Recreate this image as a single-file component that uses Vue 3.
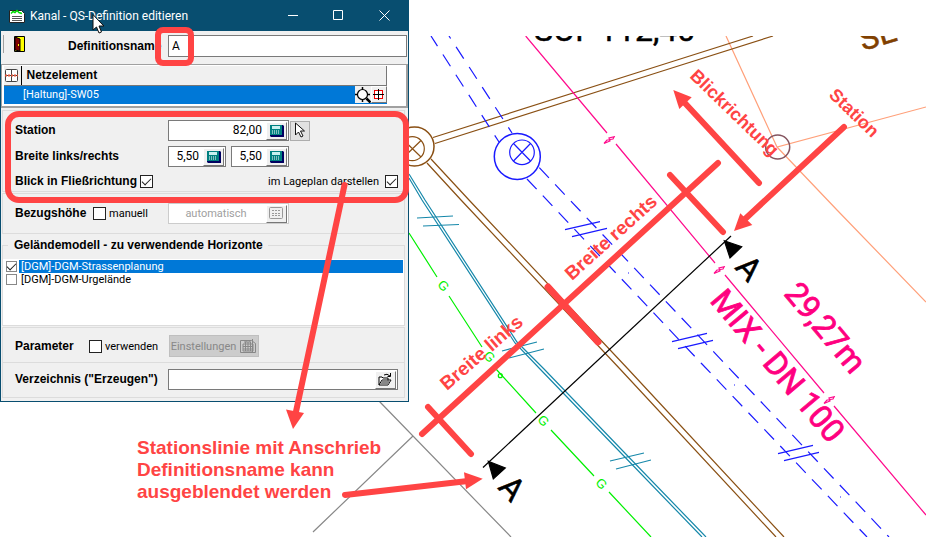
<script setup>
import { ref } from 'vue'

const name = ref('A')
const station = ref('82,00')
const left = ref('5,50')
const right = ref('5,50')
const flow = ref(true)
const showOnPlan = ref(true)
const manual = ref(false)
const height = ref('automatisch')
const useParams = ref(false)
const directory = ref('')
const horizons = ref([
  { label: '[DGM]-DGM-Strassenplanung', on: true, selected: true },
  { label: '[DGM]-DGM-Urgelände', on: false, selected: false },
])

const gasMarks = [[443, 286], [489, 357], [543, 421], [601, 484]]
const breaks = [[609, 140], [719, 270], [829, 400]]
</script>

<template>
  <main class="stage">
    <svg class="plan" aria-label="Lageplan">
      <defs>
        <clipPath id="plan-area"><rect x="0" y="36" width="926" height="501" /></clipPath>
      </defs>
      <g clip-path="url(#plan-area)">
        <g class="salmon">
          <path d="M726 36L777 147L926 107M777 147L837 210L926 302" />
        </g>
        <circle class="node" cx="777.7" cy="147" r="12" />
        <g class="grey"><path d="M379 401L511 537M313 532L413 436" /></g>
        <g class="green">
          <path d="M409 233L437 277M449 296L482 347M496 369L536 413M551 430L594 476M609 492L651 537" />
          <circle cx="500.3" cy="375.7" r="2" />
        </g>
        <text v-for="(g, i) in gasMarks" :key="'g' + i" class="gas" :transform="`translate(${g[0]} ${g[1]}) rotate(48)`" y="4">G</text>
        <g class="teal">
          <path d="M409 174L425 200L517 342L544 369L620 448L706 537M409 178L422 200L515 343L540 369L620 452L702 537" />
          <path d="M417 218L453 216M423 226L459 224.500M502 351L537 342M509 358L544 349M610 461L644 453M616 469L651 460" />
        </g>
        <g class="brown">
          <path d="M433 137.500L670 62.300L753 36M435 143.500L660 71.700L773 36" />
          <path d="M431 159L469 200L628 369L784 537M427 163L461 200L620 369L776 537" />
          <circle class="heavy" cx="414.500" cy="146.500" r="19.500" />
          <circle cx="412.300" cy="148.700" r="12" />
          <path d="M404 140.500L421 157M421 140.500L404 157" />
        </g>
        <g class="blue">
          <path class="dash" stroke-dashoffset="2" d="M431 36L499 142" />
          <path class="dash" stroke-dashoffset="11" d="M449 36L512 133" />
          <path class="dash low" d="M527 179L702 364L867 537" />
          <path class="dash low" d="M539.300 167.700L889 537" />
          <circle class="heavy" cx="517.300" cy="156.500" r="23" />
          <circle cx="522" cy="152.300" r="12.300" />
          <path d="M513.500 143.500L530.500 161M530.500 143.500L513.500 161" />
          <path d="M565 229.700L600 221.700M572 236.700L607 228.300M672 341.700L707 333.300M678 348.700L713 340.300M778 453.700L813 445.300M784 460.700L819 452.300" />
          <path d="M628 273h1M734 385h1M840 497h1" />
        </g>
        <g class="pink">
          <path d="M525.700 36L607 133M616 144L715 263M725 275L824 393M834 406L926 515" />
          <path v-for="(b, i) in breaks" :key="'b' + i" :transform="`translate(${b[0]} ${b[1]})`" d="M-5 3.500L1 1L0 -2L6 -3.500M-5 3.500L-2 0L4 -1L5 -3" />
        </g>
        <g class="black">
          <path d="M731 236L483 467.500" />
          <path class="solid" d="M724.300 240.700L741.700 246.700L730 258ZM488.300 461.300L505.300 468L493.300 479Z" />
        </g>
        <text class="cad dark" transform="translate(734 268) rotate(47)">A</text>
        <text class="cad dark" transform="translate(497 488) rotate(47)">A</text>
        <text class="cad magenta" transform="translate(783 294) rotate(50)">29,27m</text>
        <text class="cad magenta" transform="translate(709 301) rotate(50)">MIX - DN 100</text>
        <text class="cad dark" x="534" y="41">SOI</text>
        <text class="cad dark" x="599" y="41">112,40</text>
        <text class="cad umber" transform="translate(863 51) rotate(-17)">SE</text>
      </g>
    </svg>

    <form class="dialog" @submit.prevent>
      <header class="title">
        <svg class="app-icon" width="16" height="16" viewBox="0 0 16 16">
          <path d="M.5 2.500h12l3 3v9H.5z" fill="#fff" stroke="#222" />
          <path d="M2 5.500l2-2 2 1 2-2 2 2 3 1" fill="none" stroke="#0d0" stroke-width="1.500" />
          <path d="M3 8.500h10M3 10.500h10M3 12.500h10" stroke="#555" />
        </svg>
        <h1>Kanal - QS-Definition editieren</h1>
        <button type="button" aria-label="Minimieren"><svg width="11" height="11"><path d="M0 5.500h10" /></svg></button>
        <button type="button" aria-label="Maximieren"><svg width="11" height="11"><path d="M.5 .5h9v9h-9z" /></svg></button>
        <button type="button" aria-label="Schließen"><svg width="11" height="11"><path d="M.5 .5l10 10M10.500 .5l-10 10" /></svg></button>
      </header>

      <div class="name-row">
        <button class="exit" type="button" aria-label="Beenden">
          <svg width="12" height="16" viewBox="0 0 12 16">
            <path d="M.5 .5h10v15H.5z" fill="#ff0" stroke="#000" />
            <path d="M1 1l5 2v12l-5-1z" fill="#800000" stroke="#000" />
            <path d="M4.500 8v2" stroke="#ff0" />
          </svg>
        </button>
        <label class="strong" for="name">Definitionsname</label>
        <input id="name" v-model="name" type="text">
      </div>

      <div class="net">
        <table>
          <thead>
            <tr>
              <th class="mark">
                <svg width="15" height="15" viewBox="0 0 15 15"><rect x="1.500" y="1.500" width="12" height="12" rx="1" fill="#fff" stroke="#444" /><path d="M7.500 1v13M1 7.500h13" stroke="#444" /><path d="M1 7.500h13" stroke="#e0553a" stroke-width="2" stroke-dasharray="2 1" /></svg>
              </th>
              <th>Netzelement</th>
            </tr>
          </thead>
          <tbody>
            <tr>
              <td class="mark"></td>
              <td>
                <div class="cell">
                  <span>[Haltung]-SW05</span>
                  <button type="button" aria-label="Zoomen"><svg width="16" height="16" viewBox="0 0 16 16"><circle cx="7.500" cy="7.500" r="5" fill="#fff" stroke="#000" stroke-width="1.200" /><path d="M7.500 0v3M7.500 12v3M0 7.500h3M12 7.500h3" stroke="#000" stroke-width="1.500" /><path d="M11.500 11.500l4 4" stroke="#000" stroke-width="2.500" /></svg></button>
                  <button class="raised" type="button" aria-label="Wählen"><svg width="14" height="14" viewBox="0 0 14 14"><rect x="2.500" y="2.500" width="8" height="8" fill="#fff" stroke="#e00" /><path d="M6.500 1v11M1 6.500h11" stroke="#000" /></svg></button>
                </div>
              </td>
            </tr>
          </tbody>
        </table>
      </div>

      <section class="panel first">
        <div class="row">
          <label class="strong lead" for="station">Station</label>
          <span class="field wide"><input id="station" v-model="station" type="text"><button class="raised calc" type="button" aria-label="Rechner"><svg width="14" height="12" viewBox="0 0 14 12"><path d="M0 0h13l1 1v11H1L0 11z" fill="#000060" /><path d="M0 0h12v10H0z" fill="#008080" /><path d="M2 1h8v3H2z" fill="#c8f0f0" /><path d="M2 6h8M2 8h8" stroke="#fff" stroke-dasharray="1 1" /></svg></button></span>
          <button class="pick" type="button" aria-label="Im Plan wählen"><svg width="12" height="17" viewBox="0 0 12 17"><path d="M1.500 1v12l3-3 2.500 5 2-1-2.500-5h4z" fill="#fff" stroke="#111" /></svg></button>
        </div>
        <div class="row">
          <label class="strong lead" for="left">Breite links/rechts</label>
          <span class="field half"><input id="left" v-model="left" type="text"><button class="raised calc" type="button" aria-label="Rechner"><svg width="14" height="12" viewBox="0 0 14 12"><path d="M0 0h13l1 1v11H1L0 11z" fill="#000060" /><path d="M0 0h12v10H0z" fill="#008080" /><path d="M2 1h8v3H2z" fill="#c8f0f0" /><path d="M2 6h8M2 8h8" stroke="#fff" stroke-dasharray="1 1" /></svg></button></span>
          <span class="field half next"><input v-model="right" type="text" aria-label="Breite rechts"><button class="raised calc" type="button" aria-label="Rechner"><svg width="14" height="12" viewBox="0 0 14 12"><path d="M0 0h13l1 1v11H1L0 11z" fill="#000060" /><path d="M0 0h12v10H0z" fill="#008080" /><path d="M2 1h8v3H2z" fill="#c8f0f0" /><path d="M2 6h8M2 8h8" stroke="#fff" stroke-dasharray="1 1" /></svg></button></span>
        </div>
        <div class="row checks">
          <label class="strong tick close">Blick in Fließrichtung <input v-model="flow" type="checkbox"></label>
          <label class="tick">im Lageplan darstellen <input v-model="showOnPlan" type="checkbox"></label>
        </div>
      </section>

      <section class="panel second">
        <div class="row">
          <label class="strong ref" for="height">Bezugshöhe</label>
          <label class="tick after"><input v-model="manual" type="checkbox"> manuell</label>
          <span class="field wide off"><input id="height" v-model="height" type="text" disabled><button class="raised calc" type="button" disabled aria-label="Rechner"><svg width="15" height="13" viewBox="0 0 15 13"><rect x=".5" y=".5" width="13" height="11" rx="1" fill="none" stroke="#999" /><path d="M3 3.500h8M3 6.500h8M3 8.500h8" stroke="#999" stroke-dasharray="2 1" /></svg></button></span>
        </div>
      </section>

      <fieldset>
        <legend>Geländemodell - zu verwendende Horizonte</legend>
        <ul>
          <li v-for="h in horizons" :key="h.label" :class="{ selected: h.selected }">
            <label><input v-model="h.on" type="checkbox"><span>{{ h.label }}</span></label>
          </li>
        </ul>
      </fieldset>

      <section class="panel params">
        <div class="row">
          <span class="strong par">Parameter</span>
          <label class="tick after"><input v-model="useParams" type="checkbox"> verwenden</label>
          <button class="settings" type="button" disabled>Einstellungen
            <svg width="17" height="16" viewBox="0 0 17 16"><path d="M.5 2.500h11l4 3v9H.5zM3 6h10v7H3zM3 8.500h10M3 11h10M5.500 4v9M8 4v9M10.500 4v9M12.500 1v14M5 5V3h2v2M9 5V3h2" fill="none" stroke="#888" /></svg>
          </button>
        </div>
      </section>
      <section class="panel folder">
        <div class="row">
          <label class="strong lead" for="dir">Verzeichnis ("Erzeugen")</label>
          <span class="field full"><input id="dir" v-model="directory" type="text"><button class="raised calc" type="button" aria-label="Öffnen"><svg width="15" height="13" viewBox="0 0 15 13"><path d="M1 12V4h3l1 1h5v3M1 12l3-5h9l-3 5z" fill="#fff" stroke="#000" /><path d="M2 11.500l2.500-4h8l-2.500 4z" fill="#888" /><path d="M6 2q3-2 6 1M12.500 0v3.500H9.500" fill="none" stroke="#000" /></svg></button></span>
        </div>
      </section>
    </form>

    <svg class="notes" aria-label="Anmerkungen">
      <rect x="8" y="114" width="398" height="86" rx="11" />
      <rect x="158" y="30" width="33" height="33" rx="5" />
      <path d="M718 163L422 434M670 175L723 232M428 407L471 454M759 183L683 101M844 127L744 220M345 495L468 481M344.500 185L295.500 414" />
      <path class="mid" d="M548 287L598 342" />
      <g class="heads">
        <path d="M673.300 90L691.700 97.300L679.300 109Z" />
        <path d="M734 231L740.300 213.300L752.300 225Z" />
        <path d="M482.700 478.700L464 472.300L466 489.300Z" />
        <path d="M293 429L286 409.500L304 413Z" />
      </g>
      <text class="dim" transform="translate(447 391) rotate(-41)">Breite links</text>
      <text class="dim" transform="translate(572 281) rotate(-42)">Breite rechts</text>
      <text class="dir" transform="translate(828 96) rotate(44)">Station</text>
      <text class="dir" transform="translate(689 77) rotate(44)">Blickrichtung</text>
      <text class="dim" x="137" y="454">Stationslinie mit Anschrieb</text>
      <text class="dim" x="137" y="476">Definitionsname kann</text>
      <text class="dim" x="137" y="498">ausgeblendet werden</text>
      <path class="cursor" d="M93 15v15l3.500-3 2.500 6 2.500-1-2.500-6h4.500z" />
    </svg>
  </main>
</template>

<style>
body { margin: 0; background: #fff; }
</style>

<style scoped>
* { box-sizing: border-box; }
.stage { display: grid; min-height: 100vh; overflow: hidden; font: 11px/13px Roboto, "Liberation Sans", sans-serif; color: #000; }
.stage > * { grid-area: 1 / 1; }
.plan, .notes { width: 100%; height: 100%; display: block; }
.notes { pointer-events: none; z-index: 2; }

.plan path, .plan circle { fill: none; stroke: currentColor; stroke-width: 1.2; }
.plan .heavy { stroke-width: 1.5; }
.salmon { color: #ffa07a; }
.plan .node { stroke: #84545f; stroke-width: 1.5; }
.grey { color: #888; }
.green { color: #00f000; }
.teal { color: #1688aa; }
.brown { color: #8a5014; }
.blue { color: #1a1aff; }
.pink { color: #ff0a8c; }
.black { color: #000; }
.plan .solid { fill: #000; }
.dash { stroke-dasharray: 14 10; }
.low { stroke-dasharray: 14 9; }
.gas { font: 13px "Liberation Sans", sans-serif; fill: #00f000; text-anchor: middle; }
.cad { font: 32px Roboto, "Liberation Sans", sans-serif; }
.dark { fill: #000; stroke: #000; stroke-width: 0.5; }
.magenta { fill: #ff0080; stroke: #ff0080; stroke-width: 0.8; }
.umber { fill: #804000; stroke: #804000; stroke-width: 0.5; }

.notes rect, .notes path { fill: none; stroke: #ff4444; stroke-width: 6; stroke-linecap: round; }
.notes .mid { stroke-width: 7; }
.notes .heads path { fill: #ff4444; stroke: none; }
.notes text { fill: #ff4444; font-family: "Liberation Sans", sans-serif; font-weight: bold; }
.dim { font-size: 19px; }
.dir { font-size: 18px; }
.notes .cursor { fill: #fff; stroke: #111; stroke-width: 1; }

.dialog { align-self: start; justify-self: start; z-index: 1; width: 409px; background: #f0f0f0; border: 1px solid #084e70; border-top: 0; }
button { padding: 0; border: 0; background: none; font: inherit; color: inherit; display: flex; align-items: center; justify-content: center; }
input { font: inherit; color: inherit; margin: 0; }
.title { display: flex; align-items: center; height: 31px; padding-left: 8px; background: #084e70; color: #fff; }
.title h1 { flex: 1; margin: 0 0 0 5px; font: 12px/16px Roboto, "Noto Sans", sans-serif; }
.title button { width: 45px; height: 31px; }
.title button:last-child { width: 47px; }
.title button path { fill: none; stroke: #fff; }
.strong, th, legend { font: bold 12px/15px "Liberation Sans", sans-serif; }

.name-row { display: flex; align-items: center; height: 33px; padding: 0 1px 3px 1px; }
.exit { width: 24px; height: 18px; border-left: 1px solid #a0a0a0; margin: 0 41px 4px 1px; justify-content: center; }
.exit svg { margin-left: 8px; }
.name-row label { width: 100px; }
.name-row input { flex: 1; min-width: 0; height: 22px; padding: 0 3px; border: 1px solid #7a7a7a; background: #fff; font-size: 12px; }

.net { border: 1px solid #a0a0a0; border-width: 1px 2px 2px 1px; background: #fff; padding: 1px 19px 3px 2px; height: 44px; }
table { width: 100%; border-collapse: collapse; table-layout: fixed; }
th { height: 19px; padding: 0 5px; text-align: left; background: #f0f0f0; border-right: 1px solid #777; border-bottom: 1px solid #777; }
td { height: 19px; padding: 0; background: #0078d7; color: #fff; border-top: 1px solid #d8ecff; }
.mark { width: 17px; padding: 0; }
th.mark { border-right-color: #000; }
.mark svg { display: block; }
.cell { display: flex; align-items: center; padding-left: 2px; }
.cell span { flex: 1; }
.cell button { width: 16px; height: 17px; background: #f0f0f0; }

.raised { border: 1px solid; border-color: #fff #777 #777 #fff; background: #f0f0f0; }
.panel { margin: 0 3px 0 1px; border: 1px solid #dcdcdc; padding: 0 6px 0 12px; }
.row { display: flex; align-items: center; }
.first { margin-top: 2px; padding-top: 9px; height: 82px; }
.first .row + .row { margin-top: 5px; }
.first .checks.row { margin-top: 7px; }
.lead { width: 153px; }
.field { display: flex; align-items: center; height: 21px; padding: 1px; border: 1px solid #7a7a7a; background: #fff; }
.field input { flex: 1; width: 0; min-width: 0; padding: 0 4px 0 0; border: 0; background: none; text-align: right; font-size: 12px; }
.wide { width: 121px; }
.half { width: 58px; }
.next { margin-left: 5px; }
.full { flex: 1; }
.calc { width: 21px; height: 18px; }
.pick { width: 20px; height: 20px; margin-left: 1px; border: 1px solid #adadad; background: #e1e1e1; }
.checks { justify-content: space-between; }
.tick { display: flex; align-items: center; gap: 6px; }
.close { gap: 3px; }
.after { gap: 3px; }
input[type="checkbox"] { appearance: none; width: 13px; height: 13px; border: 1px solid #222; background: #fff; flex: none; display: grid; place-items: center; }
input[type="checkbox"]:checked::before { content: ""; width: 8px; height: 4px; margin-top: -3px; border: solid #222; border-width: 0 0 1px 1px; transform: rotate(-45deg); }
.second { margin-top: 1px; padding-top: 9px; height: 41px; }
.ref, .par { width: 78px; }
.par { width: 74px; }
.second .after { width: 75px; }
.off { border-color: #ccc; color: #a0a0a0; }
.off input { text-align: center; font-size: 11px; }

fieldset { margin: 4px 3px 0 1px; padding: 6px 0 0; border: 1px solid #dcdcdc; min-width: 0; }
legend { margin-left: 5px; padding: 0 5px 0 6px; }
ul { margin: 0; padding: 1px 1px 0 0; list-style: none; background: #fff; height: 66px; }
li label { display: flex; align-items: center; }
li input[type="checkbox"] { width: 11px; height: 11px; margin: 1px 2px 1px 3px; border-color: #888; }
li span { flex: 1; padding-left: 2px; }
.selected span { background: #0078d7; color: #fff; }
.params { margin-top: 1px; height: 35px; padding-top: 7px; border-bottom: 0; }
.params .after { width: 80px; }
.settings { width: 90px; height: 22px; gap: 4px; border: 1px solid #bfbfbf; background: #ccc; color: #888; }
.folder { height: 36px; padding-top: 6px; margin-bottom: 3px; }
</style>
